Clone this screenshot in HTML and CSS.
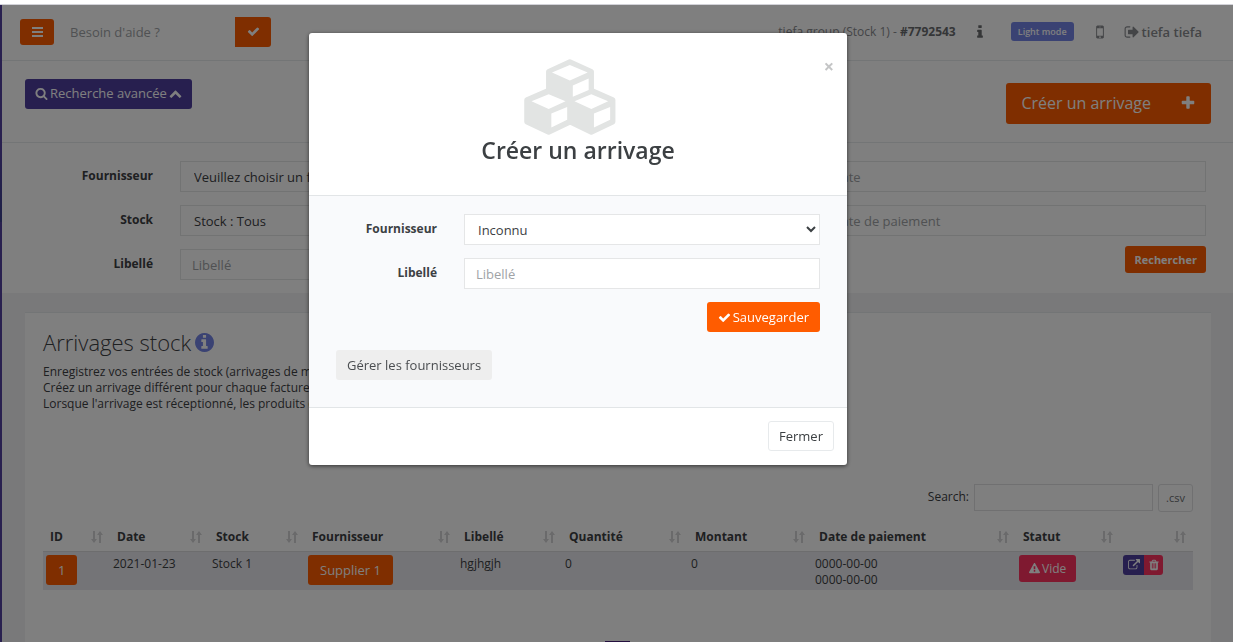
FILE: index.html
```html
<!DOCTYPE html>
<html lang="fr">
<head>
<meta charset="utf-8">
<title>Arrivages stock</title>
<link rel="stylesheet" href="styles.css">
</head>
<body>
<svg class="defs" aria-hidden="true">
  <symbol id="check" viewBox="0 0 1792 1792"><path d="M1671 566q0 40-28 68l-724 724-136 136q-28 28-68 28t-68-28l-136-136-362-362q-28-28-28-68t28-68l136-136q28-28 68-28t68 28l294 295 656-657q28-28 68-28t68 28l136 136q28 28 28 68z"/></symbol>
  <symbol id="sort" viewBox="0 0 12 14"><path d="M2 1h2v8h2L3 13 0 9h2zM8 13h2V5h2L9 1 6 5h2z"/></symbol>
</svg>
<div class="window-edge"></div>
<div class="page">
  <aside class="sidebar"></aside>
  <div class="main">
    <header class="topbar">
      <button class="btn orange menu" aria-label="Menu"><svg class="icon" viewBox="0 0 13 13"><path d="M1 2h11v2H1zM1 6h11v2H1zM1 10h11v2H1z"/></svg></button>
      <input class="help" type="text" placeholder="Besoin d'aide ?" aria-label="Besoin d'aide ?">
      <button class="btn orange help-go" aria-label="Valider"><svg class="icon"><use href="#check"/></svg></button>
      <nav class="usernav">
        <span class="group">tiefa group (Stock 1) - <strong>#7792543</strong></span>
        <a href="#" class="info" aria-label="Informations"><svg class="icon i16" viewBox="0 0 1792 1792"><path d="M1216 1344v128q0 26-19 45t-45 19h-512q-26 0-45-19t-19-45v-128q0-26 19-45t45-19h64v-384h-64q-26 0-45-19t-19-45v-128q0-26 19-45t45-19h384q26 0 45 19t19 45v576h64q26 0 45 19t19 45zm-128-1152v192q0 26-19 45t-45 19h-256q-26 0-45-19t-19-45v-192q0-26 19-45t45-19h256q26 0 45 19t19 45z"/></svg></a>
        <button class="btn mode">Light mode</button>
        <a href="#" class="mobile" aria-label="Mobile"><svg class="icon i18" viewBox="0 0 1792 1792"><path d="M976 1408q0-33-23.5-56.5t-56.5-23.5-56.5 23.5-23.5 56.5 23.5 56.5 56.5 23.5 56.5-23.5 23.5-56.5zm208-160v-704q0-13-9.5-22.5t-22.5-9.5h-512q-13 0-22.5 9.5t-9.5 22.5v704q0 13 9.5 22.5t22.5 9.5h512q13 0 22.5-9.5t9.5-22.5zm-192-848q0-16-16-16h-160q-16 0-16 16t16 16h160q16 0 16-16zm288-16v1024q0 52-38 90t-90 38h-512q-52 0-90-38t-38-90v-1024q0-52 38-90t90-38h512q52 0 90 38t38 90z"/></svg></a>
        <a href="#" class="logout"><svg class="icon i16" viewBox="0 0 1792 1792"><path d="M704 1440q0 4 1 20t.5 26.5-3 23.5-10 19.5-20.5 6.5h-320q-119 0-203.5-84.5t-84.5-203.5v-704q0-119 84.5-203.5t203.5-84.5h320q13 0 22.5 9.5t9.5 22.5q0 4 1 20t.5 26.5-3 23.5-10 19.5-20.5 6.5h-320q-66 0-113 47t-47 113v704q0 66 47 113t113 47h312l11.5 1 11.5 3 8 5.5 7 9 2 13.5zm928-544q0 26-19 45l-544 544q-19 19-45 19t-45-19-19-45v-288h-448q-26 0-45-19t-19-45v-384q0-26 19-45t45-19h448v-288q0-26 19-45t45-19 45 19l544 544q19 19 19 45z"/></svg>tiefa tiefa</a>
      </nav>
    </header>

    <div class="actions">
      <button class="btn purple advanced"><svg class="icon" viewBox="0 0 1792 1792"><path d="M1216 832q0-185-131.5-316.5t-316.5-131.5-316.5 131.5-131.5 316.5 131.5 316.5 316.5 131.5 316.5-131.5 131.5-316.5zm512 832q0 52-38 90t-90 38q-54 0-90-38l-343-342q-179 124-399 124-143 0-273.5-55.5t-225-150-150-225-55.5-273.5 55.5-273.5 150-225 225-150 273.5-55.5 273.5 55.5 225 150 150 225 55.5 273.5q0 220-124 399l343 343q37 37 37 90z"/></svg>Recherche avancée<svg class="icon" viewBox="0 0 1792 1792"><path d="M1683 1331l-166 165q-19 19-45 19t-45-19l-531-531-531 531q-19 19-45 19t-45-19l-166-165q-19-19-19-45.5t19-45.5l742-741q19-19 45-19t45 19l742 741q19 19 19 45.5t-19 45.5z"/></svg></button>
      <button class="btn orange create">Créer un arrivage<svg class="icon i16" viewBox="0 0 1792 1792"><path d="M1600 736v192q0 40-28 68t-68 28h-416v416q0 40-28 68t-68 28h-192q-40 0-68-28t-28-68v-416h-416q-40 0-68-28t-28-68v-192q0-40 28-68t68-28h416v-416q0-40 28-68t68-28h192q40 0 68 28t28 68v416h416q40 0 68 28t28 68z"/></svg></button>
    </div>

    <form class="filters">
      <label for="f-sup">Fournisseur</label>
      <select id="f-sup" class="field"><option>Veuillez choisir un fournisseur</option></select>
      <input class="field far" type="text" placeholder="Date" aria-label="Date">
      <label for="f-stock">Stock</label>
      <select id="f-stock" class="field"><option>Stock : Tous</option></select>
      <input class="field far" type="text" placeholder="Date de paiement" aria-label="Date de paiement">
      <label for="f-lib">Libellé</label>
      <input id="f-lib" class="field" type="text" placeholder="Libellé">
      <button type="button" class="btn orange far search">Rechercher</button>
    </form>

    <section class="card">
      <h1>Arrivages stock <svg class="icon" viewBox="128 128 1536 1536"><path d="M1152 1376v-160q0-14-9-23t-23-9h-96v-512q0-14-9-23t-23-9h-320q-14 0-23 9t-9 23v160q0 14 9 23t23 9h96v320h-96q-14 0-23 9t-9 23v160q0 14 9 23t23 9h448q14 0 23-9t9-23zm-128-896v-160q0-14-9-23t-23-9h-192q-14 0-23 9t-9 23v160q0 14 9 23t23 9h192q14 0 23-9t9-23zm640 416q0 209-103 385.5t-279.5 279.5-385.5 103-385.5-103-279.5-279.5-103-385.5 103-385.5 279.5-279.5 385.5-103 385.5 103 279.5 279.5 103 385.5z"/></svg></h1>
      <p>Enregistrez vos entrées de stock (arrivages de ma<br>Créez un arrivage différent pour chaque facture f<br>Lorsque l'arrivage est réceptionné, les produits q</p>
      <div class="tools">
        <label for="t-search">Search:</label>
        <input id="t-search" type="search">
        <button class="btn csv">.csv</button>
      </div>
      <table>
        <colgroup><col class="c1"><col class="c2"><col class="c3"><col class="c4"><col class="c5"><col class="c6"><col class="c7"><col class="c8"><col class="c9"><col class="c10"></colgroup>
        <thead>
          <tr>
            <th><div>ID<svg><use href="#sort"/></svg></div></th>
            <th><div>Date<svg><use href="#sort"/></svg></div></th>
            <th><div>Stock<svg><use href="#sort"/></svg></div></th>
            <th><div>Fournisseur<svg><use href="#sort"/></svg></div></th>
            <th><div>Libellé<svg><use href="#sort"/></svg></div></th>
            <th><div>Quantité<svg><use href="#sort"/></svg></div></th>
            <th><div>Montant<svg><use href="#sort"/></svg></div></th>
            <th><div>Date de paiement<svg><use href="#sort"/></svg></div></th>
            <th><div>Statut<svg><use href="#sort"/></svg></div></th>
            <th><div><svg><use href="#sort"/></svg></div></th>
          </tr>
        </thead>
        <tbody>
          <tr>
            <td class="tight"><button class="btn orange">1</button></td>
            <td>2021-01-23</td>
            <td>Stock 1</td>
            <td class="tight"><button class="btn orange">Supplier 1</button></td>
            <td>hgjhgjh</td>
            <td>0</td>
            <td>0</td>
            <td>0000-00-00<br>0000-00-00</td>
            <td class="tight"><button class="btn red state"><svg class="icon" viewBox="0 0 1792 1792"><path d="M1024 1375v-190q0-14-9.5-23.5t-22.5-9.5h-192q-13 0-22.5 9.5t-9.5 23.5v190q0 14 9.5 23.5t22.5 9.5h192q13 0 22.5-9.5t9.5-23.5zm-2-374l18-459q0-12-10-19-13-11-24-11h-220q-11 0-24 11-10 7-10 21l17 457q0 10 10 16.5t24 6.5h185q14 0 23.5-6.5t10.5-16.5zm-14-934l768 1408q35 63-2 126-17 29-46.5 46t-63.5 17h-1536q-34 0-63.5-17t-46.5-46q-37-63-2-126l768-1408q17-31 47-49t65-18 65 18 47 49z"/></svg>Vide</button></td>
            <td class="tight"><div class="pair"><button class="btn purple" aria-label="Ouvrir"><svg class="icon" viewBox="0 0 1792 1792"><path d="M1408 928v320q0 119-84.5 203.5t-203.5 84.5h-832q-119 0-203.5-84.5t-84.5-203.5v-832q0-119 84.5-203.5t203.5-84.5h704q14 0 23 9t9 23v64q0 14-9 23t-23 9h-704q-66 0-113 47t-47 113v832q0 66 47 113t113 47h832q66 0 113-47t47-113v-320q0-14 9-23t23-9h64q14 0 23 9t9 23zm384-864v512q0 26-19 45t-45 19-45-19l-176-176-652 652q-10 10-23 10t-23-10l-114-114q-10-10-10-23t10-23l652-652-176-176q-19-19-19-45t19-45 45-19h512q26 0 45 19t19 45z"/></svg></button><button class="btn red" aria-label="Supprimer"><svg class="icon" viewBox="0 0 1792 1792"><path d="M704 1376v-704q0-14-9-23t-23-9h-64q-14 0-23 9t-9 23v704q0 14 9 23t23 9h64q14 0 23-9t9-23zm256 0v-704q0-14-9-23t-23-9h-64q-14 0-23 9t-9 23v704q0 14 9 23t23 9h64q14 0 23-9t9-23zm256 0v-704q0-14-9-23t-23-9h-64q-14 0-23 9t-9 23v704q0 14 9 23t23 9h64q14 0 23-9t9-23zm-544-992h448l-48-117q-7-9-17-11h-317q-10 2-17 11zm928 32v64q0 14-9 23t-23 9h-96v948q0 83-47 143.5t-113 60.5h-832q-66 0-113-58.5t-47-141.5v-952h-96q-14 0-23-9t-9-23v-64q0-14 9-23t23-9h309l70-167q15-37 54-63t79-26h320q40 0 79 26t54 63l70 167h309q14 0 23 9t9 23z"/></svg></button></div></td>
          </tr>
        </tbody>
      </table>
    </section>
  </div>
</div>

<div class="backdrop">
  <div class="modal" role="dialog" aria-labelledby="modal-title">
    <div class="modal-head">
      <button class="close" aria-label="Fermer la fenêtre">×</button>
      <svg class="cubes" viewBox="192 86 277 230">
        <g class="solid"><path d="M330 95l65 29v63l-65 30-64-30v-63z"/><path d="M266 181l65 29v66l-65 31-66-31v-66z"/><path d="M395 181l65 29v66l-65 31-64-31v-66z"/></g>
        <g class="hole"><path d="M276 127l54-23 54 23-54 24zM339 166l48-21v35l-48 20z"/><path d="M214 214l52-21 51 21-51 23zM274 251l48-20v39l-48 23z"/><path d="M344 214l51-21 51 21-51 23zM403 251l49-20v39l-49 23z"/></g>
      </svg>
      <h2 id="modal-title">Créer un arrivage</h2>
    </div>
    <form class="modal-body">
      <div class="row"><label for="m-sup">Fournisseur</label><select id="m-sup" class="field"><option>Inconnu</option></select></div>
      <div class="row"><label for="m-lib">Libellé</label><input id="m-lib" class="field" type="text" placeholder="Libellé"></div>
      <button type="button" class="btn orange save"><svg class="icon"><use href="#check"/></svg>Sauvegarder</button>
      <button type="button" class="btn manage">Gérer les fournisseurs</button>
    </form>
    <div class="modal-foot"><button class="btn white">Fermer</button></div>
  </div>
</div>
<div class="dock"></div>
</body>
</html>
```
FILE: styles.css
```css
* { box-sizing: border-box; }
body {
  margin: 0;
  height: 100vh;
  overflow: hidden;
  display: flex;
  flex-direction: column;
  background: #fff;
  color: #3c4043;
  font: 13px/18px "Open Sans", "Noto Sans", sans-serif;
}
.defs { display: none; }
button, input, select { font: inherit; color: inherit; margin: 0; }
a { color: inherit; text-decoration: none; }
.icon { width: 13px; height: 13px; fill: currentColor; flex: none; }
.i16 { width: 16px; height: 16px; }
.i18 { width: 18px; height: 18px; }

.window-edge { height: 5px; flex: none; border-bottom: 1px solid #d2d2d8; }
.page { flex: 1; min-height: 0; display: flex; background: #f3f3f4; }
.sidebar {
  width: 2px;
  flex: none;
  background: linear-gradient(#52419f 0 145px, #3c408e 217px, #52419f 217px);
}
.main { flex: 1; min-width: 0; display: flex; flex-direction: column; }

.btn {
  display: inline-flex;
  align-items: center;
  justify-content: center;
  gap: 3px;
  height: 30px;
  padding: 0 12px;
  border: 0;
  border-radius: 3px;
  color: #fff;
  white-space: nowrap;
}
.orange { background: #ff5c00; }
.purple { background: #4f3f9f; }
.red { background: #ff3361; }

.topbar {
  display: flex;
  align-items: center;
  height: 56px;
  flex: none;
  padding: 0 31px 2px 18px;
  background: #fff;
  border-bottom: 1px solid #e7eaec;
}
.menu { width: 34px; height: 26px; padding: 0; }
.help {
  width: 181px;
  padding: 0 0 0 16px;
  border: 0;
  background: none;
}
.help::placeholder, .field::placeholder { color: #a0a3a6; opacity: 1; }
.help-go { width: 36px; padding: 0; border-radius: 0 3px 3px 0; }
.usernav {
  display: flex;
  align-items: center;
  margin-left: auto;
  color: #888a8e;
}
.group { font-size: 12px; }
.group strong { color: #6a6c6f; }
.info { display: flex; margin-left: 16px; color: #6a6c6f; }
.mode {
  height: 19px;
  margin-left: 23px;
  padding: 0 7px;
  background: #7485e6;
  font-size: 9px;
  font-weight: 600;
}
.mobile { display: flex; margin-left: 17px; }
.logout {
  display: flex;
  align-items: center;
  gap: 2px;
  margin-left: 15px;
  font-weight: 600;
}

.actions {
  display: flex;
  justify-content: space-between;
  align-items: flex-start;
  height: 82px;
  flex: none;
  padding: 18px 22px 0 23px;
  background: #fff;
  border-bottom: 1px solid #e7eaec;
}
.advanced { padding: 0 10px 2px; gap: 2px; }
.create {
  height: 41px;
  margin-top: 4px;
  padding: 0 15px 2px;
  gap: 29px;
  font-size: 16px;
}

.filters {
  display: grid;
  grid-template-columns: 128px 1fr 200px 1fr;
  gap: 13px 27px;
  padding: 18px 27px 13px 23px;
  background: #fff;
}
label { font-size: 12px; font-weight: 700; line-height: 29px; text-align: right; }
.field {
  width: 100%;
  min-width: 0;
  height: 31px;
  padding: 0 11px;
  border: 1px solid #e5e6e7;
  border-radius: 0;
  background: #fff;
}
select.field { padding: 0 9px; }
.far { grid-column: 4; }
.search {
  justify-self: end;
  height: 27px;
  margin-top: -3px;
  padding: 0 9px;
  font-size: 11px;
  font-weight: 700;
}

.card {
  flex: 1;
  margin: 19px 22px 0 23px;
  padding: 16px 18px;
  background: #fff;
  border-top: 1px solid #e7eaec;
}
h1 {
  display: flex;
  align-items: center;
  gap: 4px;
  margin: 0 0 9px;
  font-size: 22px;
  line-height: 26px;
  font-weight: 300;
}
h1 .icon { width: 19px; height: 19px; color: #7485e6; }
p { margin: 0 0 72px; font-size: 12px; line-height: 16px; }
.tools {
  display: flex;
  justify-content: flex-end;
  gap: 5px;
  margin-bottom: 14px;
}
.tools label { font-weight: 400; line-height: 26px; }
.tools input {
  width: 179px;
  height: 27px;
  border: 1px solid #e0e1e2;
  background: #fff;
}
.csv {
  width: 35px;
  height: 28px;
  padding: 0;
  border: 1px solid #e0e1e2;
  background: #fff;
  color: #6a6c6f;
  font-size: 11px;
}
table {
  width: 100%;
  table-layout: fixed;
  border-collapse: separate;
  border-spacing: 0;
  font-size: 12px;
  line-height: 16px;
}
.c1 { width: 67px; }
.c2 { width: 99px; }
.c3 { width: 96px; }
.c4 { width: 152px; }
.c5 { width: 105px; }
.c6 { width: 126px; }
.c7 { width: 124px; }
.c9 { width: 104px; }
.c10 { width: 73px; }
th { padding: 3px 7px 6px; border-bottom: 1px solid #dadadc; }
th div { display: flex; align-items: center; justify-content: space-between; min-height: 16px; }
th svg { width: 12px; height: 14px; margin-left: auto; fill: #d4d4d6; }
td { padding: 4px 3px 2px; vertical-align: top; background: #e9e9ee; }
.tight { padding-top: 3px; }
td .btn { vertical-align: top; font-size: 13px; }
td .state { height: 27px; padding: 0 10px; gap: 2px; font-size: 12px; }
.state .icon { width: 11px; height: 11px; }
.pair { display: flex; }
.pair .btn { width: 21px; height: 20px; padding: 0; }
.pair .btn .icon { width: 12px; height: 12px; }
.pair .purple { border-radius: 3px 0 0 3px; }
.pair .red { width: 19px; border-radius: 0 3px 3px 0; }

.backdrop {
  position: fixed;
  inset: 5px 0 0;
  display: flex;
  justify-content: center;
  align-items: flex-start;
  padding: 28px 77px 0 0;
  background: rgba(0, 0, 0, .5);
}
.modal {
  width: 100%;
  max-width: 538px;
  background: #fff;
  border-radius: 3px;
  box-shadow: 0 1px 4px rgba(0, 0, 0, .6);
}
.modal-head {
  position: relative;
  padding: 26px 15px 29px;
  text-align: center;
  border-bottom: 1px solid #e2e5e7;
}
.close {
  position: absolute;
  top: 21px;
  right: 13px;
  padding: 0;
  border: 0;
  background: none;
  color: #c4c5c6;
  font-size: 18px;
  line-height: 24px;
  font-weight: 700;
}
.cubes { display: block; width: 108px; height: 76px; margin: 0 auto; padding-right: 16px; }
.solid { fill: #e2e4e3; stroke: #e2e4e3; stroke-width: 16; stroke-linejoin: round; }
.hole { fill: #fff; }
h2 { margin: 0; font-size: 23px; line-height: 31px; font-weight: 600; }
.modal-body {
  display: flex;
  flex-direction: column;
  padding: 18px 27px 27px;
  background: #f9fafc;
  border-bottom: 1px solid #e2e5e7;
}
.row { display: flex; gap: 27px; margin-bottom: 13px; }
.row label { width: 101px; flex: none; }
.save { align-self: flex-end; margin-bottom: 18px; padding: 0 11px; gap: 2px; }
.manage { align-self: flex-start; padding: 0 11px; background: #eee; color: #4a4d50; }
.modal-foot { display: flex; justify-content: flex-end; padding: 13px 13px 14px; }
.white { padding: 0 10px; background: #fff; border: 1px solid #e7eaec; color: #3c4043; }

.dock {
  position: fixed;
  bottom: 0;
  left: calc(50% - 12px);
  width: 25px;
  height: 1px;
  background: #24103f;
}
```
